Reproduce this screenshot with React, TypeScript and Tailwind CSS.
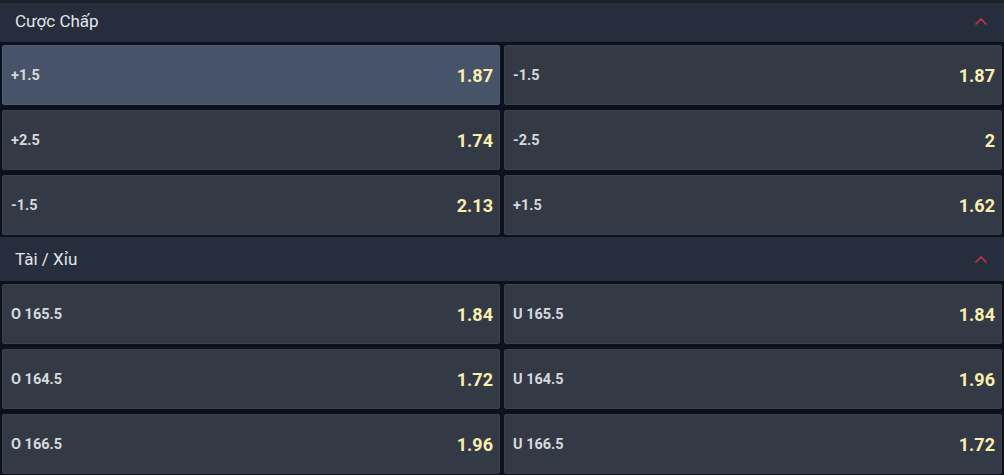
const sections = [
  {
    title: "Cược Chấp",
    rows: [
      [
        { label: "+1.5", odds: "1.87", active: true },
        { label: "-1.5", odds: "1.87" },
      ],
      [
        { label: "+2.5", odds: "1.74" },
        { label: "-2.5", odds: "2" },
      ],
      [
        { label: "-1.5", odds: "2.13" },
        { label: "+1.5", odds: "1.62" },
      ],
    ],
  },
  {
    title: "Tài / Xỉu",
    rows: [
      [
        { label: "O 165.5", odds: "1.84" },
        { label: "U 165.5", odds: "1.84" },
      ],
      [
        { label: "O 164.5", odds: "1.72" },
        { label: "U 164.5", odds: "1.96" },
      ],
      [
        { label: "O 166.5", odds: "1.96" },
        { label: "U 166.5", odds: "1.72" },
      ],
    ],
  },
];

type Cell = { label: string; odds: string; active?: boolean };

const Chevron = () => (
  <svg width="14" height="9" viewBox="0 0 14 9" fill="none">
    <path d="M1.5 7.5L7 2l5.5 5.5" stroke="#c92f50" strokeWidth="1.6" />
  </svg>
);

const OddsCell = ({ cell }: { cell: Cell }) => (
  <div
    className={`h-[60px] flex items-center justify-between pl-[8px] pr-[6px] rounded-[2px] border ${
      cell.active ? "bg-[#465369] border-[#4f5c72]" : "bg-[#333a46] border-[#3a414d]"
    }`}
  >
    <span className="pt-[2px] text-[14.5px] font-bold text-[#d6d9de]">{cell.label}</span>
    <span className="pt-[1px] text-[18px] font-bold text-[#fcefae]">{cell.odds}</span>
  </div>
);

export default function App() {
  return (
    <div
      className="w-[1004px] h-[475px] overflow-hidden bg-[#0b111d]"
      style={{ fontFamily: "Roboto, 'Liberation Sans', sans-serif" }}
    >
      <div className="h-[3px] bg-[#1b1f27]" />
      {sections.map((s, i) => (
        <div key={s.title} className={i === 0 ? "" : "mt-[2px]"}>
          <div
            className={`flex items-center justify-between bg-[#262d3c] pl-[15px] pr-[16px] ${
              i === 0 ? "h-[39px] pb-[2px]" : "h-[44px] pt-[1px]"
            }`}
          >
            <span className="text-[17px] text-[#e3e6ea]">{s.title}</span>
            <Chevron />
          </div>
          <div className="mt-[3px] grid grid-cols-2 gap-x-[4px] gap-y-[5px] px-[2px]">
            {s.rows.flat().map((c, j) => (
              <OddsCell key={j} cell={c} />
            ))}
          </div>
        </div>
      ))}
    </div>
  );
}
